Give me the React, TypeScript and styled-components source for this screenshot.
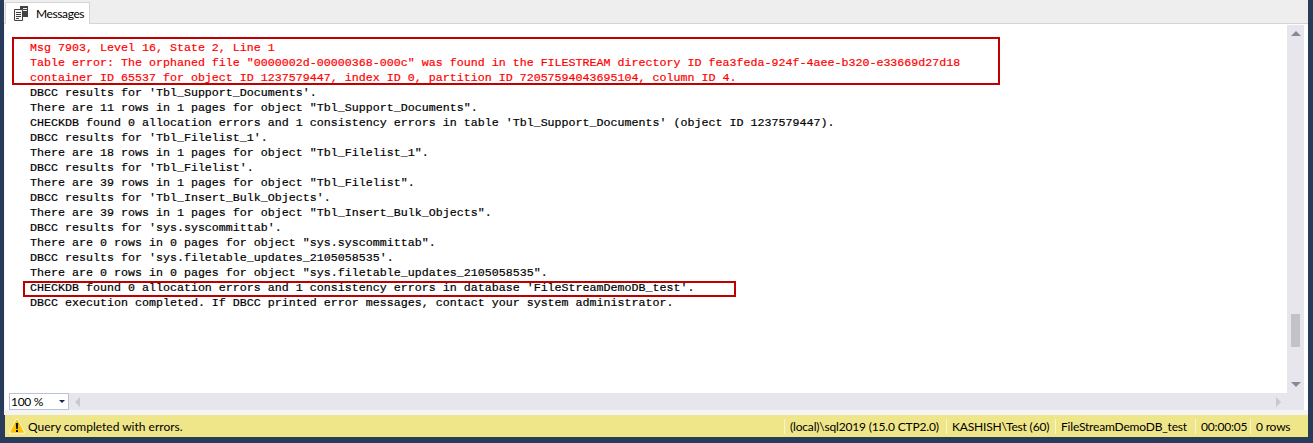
import styled, { createGlobalStyle } from 'styled-components';

const GlobalStyle = createGlobalStyle`
  html, body { margin: 0; padding: 0; background: #293b5a; }
`;

const messages: { text: string; error?: boolean }[] = [
  { text: 'Msg 7903, Level 16, State 2, Line 1', error: true },
  { text: 'Table error: The orphaned file "0000002d-00000368-000c" was found in the FILESTREAM directory ID fea3feda-924f-4aee-b320-e33669d27d18', error: true },
  { text: 'container ID 65537 for object ID 1237579447, index ID 0, partition ID 72057594043695104, column ID 4.', error: true },
  { text: "DBCC results for 'Tbl_Support_Documents'." },
  { text: 'There are 11 rows in 1 pages for object "Tbl_Support_Documents".' },
  { text: "CHECKDB found 0 allocation errors and 1 consistency errors in table 'Tbl_Support_Documents' (object ID 1237579447)." },
  { text: "DBCC results for 'Tbl_Filelist_1'." },
  { text: 'There are 18 rows in 1 pages for object "Tbl_Filelist_1".' },
  { text: "DBCC results for 'Tbl_Filelist'." },
  { text: 'There are 39 rows in 1 pages for object "Tbl_Filelist".' },
  { text: "DBCC results for 'Tbl_Insert_Bulk_Objects'." },
  { text: 'There are 39 rows in 1 pages for object "Tbl_Insert_Bulk_Objects".' },
  { text: "DBCC results for 'sys.syscommittab'." },
  { text: 'There are 0 rows in 0 pages for object "sys.syscommittab".' },
  { text: "DBCC results for 'sys.filetable_updates_2105058535'." },
  { text: 'There are 0 rows in 0 pages for object "sys.filetable_updates_2105058535".' },
  { text: "CHECKDB found 0 allocation errors and 1 consistency errors in database 'FileStreamDemoDB_test'." },
  { text: 'DBCC execution completed. If DBCC printed error messages, contact your system administrator.' },
];

const statusCells = [
  { text: '(local)\\sql2019 (15.0 CTP2.0)', width: 162 },
  { text: 'KASHISH\\Test (60)', width: 109 },
  { text: 'FileStreamDemoDB_test', width: 140 },
  { text: '00:00:05', width: 55 },
  { text: '0 rows', width: 58 },
];

function App() {
  return (
    <>
      <GlobalStyle />
      <Window>
        <TabStrip>
          <Tab>
            <MessagesIcon />
            Messages
          </Tab>
        </TabStrip>
        <Panel>
          <ContentRow>
            <MessageArea>
              {messages.map((m, i) => (
                <Line key={i} $error={m.error}>{m.text}</Line>
              ))}
              <ErrorBox />
              <SummaryBox />
            </MessageArea>
            <VScroll>
              <ArrowUp />
              <ThumbTrack><Thumb /></ThumbTrack>
              <ArrowDown />
            </VScroll>
          </ContentRow>
          <BottomRow>
            <ZoomBox>
              100 %
              <ZoomCaret />
            </ZoomBox>
            <HScroll>
              <ArrowLeft />
              <ArrowRight />
            </HScroll>
          </BottomRow>
        </Panel>
        <StatusBar>
          <StatusMain>
            <WarningIcon />
            Query completed with errors.
          </StatusMain>
          {statusCells.map((c) => (
            <StatusCell key={c.text} $width={c.width}>{c.text}</StatusCell>
          ))}
        </StatusBar>
      </Window>
    </>
  );
}

function MessagesIcon() {
  return (
    <TabIcon width="15" height="15" viewBox="0 0 15 15">
      <path d="M0.5 3.5h8v11h-8z" fill="#f6f6f6" stroke="#424242" />
      <path d="M2 6.5h5M2 8.5h5M2 10.5h5M2 12.5h3" stroke="#424242" />
      <path d="M6 0h8v11H9V3H6z" fill="#424242" />
      <path d="M9 2h4v1H9zM9 4h4v1H9z" fill="#eeeeee" />
    </TabIcon>
  );
}

function WarningIcon() {
  return (
    <TabIcon width="16" height="16" viewBox="0 0 16 16">
      <path d="M8 2.2 14.6 14.4H1.4z" fill="#fbf6d8" stroke="#fbf6d8" strokeWidth="2.6" strokeLinejoin="round" />
      <path d="M8 2.6 14 14H2z" fill="#ffc400" stroke="#ffc400" strokeWidth="1.6" strokeLinejoin="round" />
      <path d="M6.8 5h2.4l-.4 6H7.2z" fill="#111" />
      <path d="M7 12h2v2H7z" fill="#111" />
    </TabIcon>
  );
}

const TabIcon = styled.svg`
  flex: none;
`;

const Window = styled.div`
  width: 1313px;
  height: 443px;
  box-sizing: border-box;
  padding: 0 5px 6px 4px;
  background: #293b5a;
  display: flex;
  flex-direction: column;
  overflow: hidden;
`;

const TabStrip = styled.div`
  height: 24px;
  flex: none;
  box-sizing: border-box;
  padding: 2px 0 0 1px;
  background: #eeeeee;
  border-bottom: 1px solid #d4d4d6;
  display: flex;
`;

const Tab = styled.div`
  width: 85px;
  height: 22px;
  box-sizing: border-box;
  border: 1px solid #d4d4d6;
  border-bottom: none;
  background: #ffffff;
  padding: 0 0 0 8px;
  display: flex;
  align-items: center;
  gap: 7px;
  font: 12px "Lato", sans-serif;
  letter-spacing: -0.4px;
  color: #000;
`;

const Panel = styled.div`
  flex: 1;
  min-height: 0;
  display: flex;
  flex-direction: column;
  background: #ffffff;
  border: solid #f4f4f4;
  border-width: 0 0 5px 1px;
  padding-right: 4px;
`;

const ContentRow = styled.div`
  flex: 1;
  min-height: 0;
  display: flex;
`;

const MessageArea = styled.div`
  flex: 1;
  position: relative;
  padding: 17px 0 0 25px;
`;

const Line = styled.div<{ $error?: boolean }>`
  height: 15px;
  line-height: 15px;
  white-space: pre;
  font-family: "Liberation Mono", monospace;
  font-size: 11.67px;
  -webkit-text-stroke: 0.2px ${(p) => (p.$error ? '#ff0000' : '#000000')};
  color: ${(p) => (p.$error ? '#ff0000' : '#000000')};
`;

const ErrorBox = styled.div`
  position: absolute;
  left: 7px;
  top: 13px;
  width: 988px;
  height: 48px;
  box-sizing: border-box;
  border: 2px solid #c00000;
`;

const SummaryBox = styled.div`
  position: absolute;
  left: 18px;
  top: 257px;
  width: 713px;
  height: 16px;
  box-sizing: border-box;
  border: 2px solid #c00000;
`;

const VScroll = styled.div`
  width: 17px;
  flex: none;
  background: #e6e6ec;
  margin-top: 1px;
  display: flex;
  flex-direction: column;
  align-items: center;
  padding: 6px 0 6px;
  box-sizing: border-box;
`;

const ThumbTrack = styled.div`
  flex: 1;
  padding-top: 278px;
`;

const Thumb = styled.div`
  width: 9px;
  height: 33px;
  background: #c2c3c9;
`;

const ArrowUp = styled.div`
  flex: none;
  border: solid transparent;
  border-width: 0 5px 5px;
  border-bottom-color: #868999;
`;

const ArrowDown = styled.div`
  flex: none;
  border: solid transparent;
  border-width: 5px 5px 0;
  border-top-color: #868999;
`;

const BottomRow = styled.div`
  height: 17px;
  flex: none;
  display: flex;
  background: #ffffff;
  padding-left: 4px;
`;

const ZoomBox = styled.div`
  width: 60px;
  flex: none;
  box-sizing: border-box;
  border: 1px solid #b9c4d6;
  background: #fff;
  padding-left: 1px;
  display: flex;
  align-items: center;
  justify-content: space-between;
  font: 12px "Lato", sans-serif;
  letter-spacing: -0.3px;
  color: #000;
`;

const ZoomCaret = styled.span`
  margin-right: 3px;
  border: solid transparent;
  border-width: 3px 3px 0;
  border-top-color: #1b2a4a;
`;

const HScroll = styled.div`
  flex: 1;
  background: #e6e6ec;
  display: flex;
  align-items: center;
  justify-content: space-between;
  padding: 0 23px 0 6px;
`;

const ArrowLeft = styled.div`
  border: solid transparent;
  border-width: 5px 5px 5px 0;
  border-right-color: #c8c9cf;
`;

const ArrowRight = styled.div`
  border: solid transparent;
  border-width: 5px 0 5px 5px;
  border-left-color: #c8c9cf;
`;

const StatusBar = styled.div`
  height: 22px;
  flex: none;
  margin-left: 1px;
  background: #efe68a;
  display: flex;
  align-items: center;
  font: 12px "Lato", sans-serif;
  color: #000;
`;

const StatusMain = styled.div`
  width: 779px;
  flex: none;
  box-sizing: border-box;
  padding-left: 4px;
  display: flex;
  align-items: center;
  gap: 3px;
`;

const StatusCell = styled.div<{ $width: number }>`
  width: ${(p) => p.$width}px;
  height: 15px;
  flex: none;
  box-sizing: border-box;
  border-left: 1px solid #f8f5d6;
  padding-left: 5px;
  line-height: 15px;
  letter-spacing: -0.18px;
  white-space: nowrap;
`;

export default App;
